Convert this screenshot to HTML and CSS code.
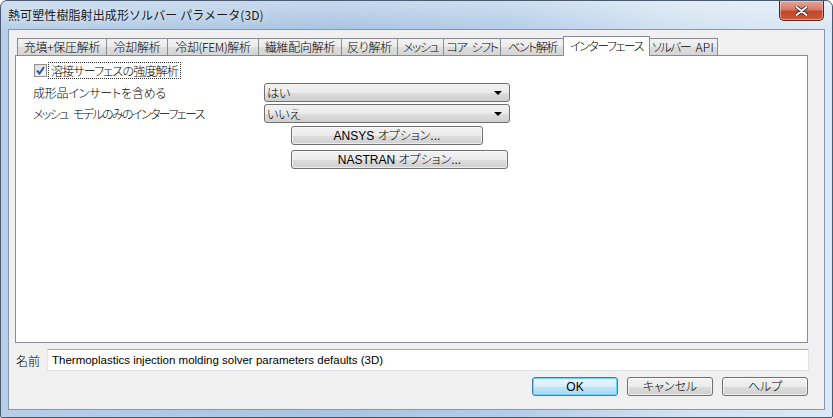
FILE: index.html
```html
<!DOCTYPE html>
<html lang="ja">
  <head>
    <meta charset="utf-8" />
    <title>熱可塑性樹脂射出成形ソルバー パラメータ(3D)</title>
    <link rel="stylesheet" href="styles.css">
  </head>
  <body>
    <div class="window">
      <div class="titlebar">
        <span class="title">熱可塑性樹脂射出成形ソルバー パラメータ(3D)</span>
        <button class="close-btn" aria-label="閉じる">
          <svg width="13" height="10" viewBox="0 0 13 10">
            <path d="M1.5 1 L11.5 9 M11.5 1 L1.5 9" stroke="#3a2a28" stroke-width="3.6" stroke-linecap="round" />
            <path d="M1.5 1 L11.5 9 M11.5 1 L1.5 9" stroke="#ffffff" stroke-width="2" stroke-linecap="round" />
          </svg>
        </button>
      </div>
      <div class="client">
        <div class="tabbox">
          <div class="tabs">
            <div class="tab">充填+保圧解析</div>
            <div class="tab">冷却解析</div>
            <div class="tab">冷却(FEM)解析</div>
            <div class="tab">繊維配向解析</div>
            <div class="tab">反り解析</div>
            <div class="tab kana">メッシュ</div>
            <div class="tab kana">コア シフト</div>
            <div class="tab kana">ベント解析</div>
            <div class="tab kana active">インターフェース</div>
            <div class="tab kana">ソルバー <span class="latin">API</span></div>
          </div>
          <div class="panel">
            <div class="check-row">
              <span class="checkbox">
                <svg width="9" height="9" viewBox="0 0 9 9">
                  <path d="M1 4.5 L3.5 7.5 L8 1" fill="none" stroke="#2c55a8" stroke-width="2" />
                </svg>
              </span>
              <span class="check-label">溶接サーフェスの強度解析</span>
            </div>
            <div class="field-row first">
              <span class="field-label">成形品インサートを含める</span>
              <div class="combo"><span>はい</span><span class="arrow"></span></div>
            </div>
            <div class="field-row second">
              <span class="field-label mesh">メッシュ モデルのみのインターフェース</span>
              <div class="combo"><span>いいえ</span><span class="arrow"></span></div>
            </div>
            <button class="btn ansys">ANSYS オプション...</button>
            <button class="btn nastran">NASTRAN オプション...</button>
          </div>
        </div>
        <div class="name-row">
          <span class="name-label">名前</span>
          <div class="name-input">Thermoplastics injection molding solver parameters defaults (3D)</div>
        </div>
        <div class="actions">
          <button class="btn dlg default">OK</button>
          <button class="btn dlg">キャンセル</button>
          <button class="btn dlg">ヘルプ</button>
        </div>
      </div>
    </div>
  </body>
</html>
```

FILE: styles.css
```css
* {
  box-sizing: border-box;
}

html,
body {
  margin: 0;
  width: 833px;
  height: 418px;
  overflow: hidden;
  background: #ffffff;
}

body {
  font-family: "Noto Sans CJK JP", "Liberation Sans", sans-serif;
  font-size: 12px;
  font-weight: 300;
  color: #000000;
  font-feature-settings: "palt";
}

.window {
  width: 833px;
  height: 418px;
  display: flex;
  flex-direction: column;
  border: 1px solid #4a5a70;
  border-radius: 7px 7px 2px 2px;
  background:
    linear-gradient(to bottom, rgba(255, 255, 255, 0.35), rgba(255, 255, 255, 0) 30px),
    linear-gradient(to right, #b7cfe9 0%, #a9c4e2 40%, #b4cde8 62%, #d2e2f2 82%, #dbe8f5 100%);
  padding: 0 7px 7px 7px;
}

.titlebar {
  height: 28px;
  display: flex;
  align-items: flex-start;
  flex-shrink: 0;
}

.title {
  margin-top: 5px;
  font-size: 12px;
  font-weight: 400;
  letter-spacing: 0.1px;
  font-feature-settings: normal;
  color: #1a1a1a;
  text-shadow: 0 0 6px rgba(255, 255, 255, 0.9);
}

.close-btn {
  margin-left: auto;
  margin-right: 1px;
  width: 45px;
  height: 20px;
  border: 1px solid #5b2219;
  border-top: none;
  border-radius: 0 0 5px 5px;
  background: linear-gradient(to bottom, #e7a596 0%, #d77a66 45%, #c4462c 55%, #c95a3c 100%);
  box-shadow: inset 0 0 0 1px rgba(255, 220, 210, 0.5);
  display: flex;
  align-items: center;
  justify-content: center;
  padding: 0;
}

.client {
  flex: 1;
  background: #f0f0f0;
  border: 1px solid #8497ae;
  display: flex;
  flex-direction: column;
  padding: 0 15px 0 6px;
}

.tabbox {
  margin-top: 6px;
  width: 793px;
}

.tabs {
  height: 19px;
  display: flex;
  align-items: flex-end;
  padding-left: 2px;
}

.tab {
  height: 17px;
  margin-right: -1px;
  border: 1px solid #898c95;
  border-bottom: none;
  background: linear-gradient(to bottom, #f2f2f2 0%, #ebebeb 50%, #dddddd 51%, #d5d5d5 100%);
  display: flex;
  align-items: center;
  justify-content: center;
  line-height: 1;
  white-space: pre;
  letter-spacing: -0.3px;
}

.tab.kana {
  letter-spacing: -1.5px;
  word-spacing: 4px;
}

.tab .latin {
  letter-spacing: 0.3px;
}

.tab:nth-child(1) { width: 90px; }
.tab:nth-child(2) { width: 62px; }
.tab:nth-child(3) { width: 92px; }
.tab:nth-child(4) { width: 84px; }
.tab:nth-child(5) { width: 57px; }
.tab:nth-child(6) { width: 47px; }
.tab:nth-child(7) { width: 58px; }
.tab:nth-child(8) { width: 65px; }
.tab:nth-child(10) { width: 70px; }

.tab.active {
  width: 87px;
  height: 20px;
  margin-left: -1px;
  margin-right: -2px;
  margin-bottom: -1px;
  background: #ffffff;
  position: relative;
  z-index: 1;
  padding-bottom: 2px;
}

.panel {
  height: 288px;
  background: #ffffff;
  border: 1px solid #898c95;
  padding: 6px 0 0 17px;
  display: flex;
  flex-direction: column;
  align-items: flex-start;
}

.check-row {
  height: 17px;
  display: flex;
  align-items: center;
}

.checkbox {
  width: 13px;
  height: 13px;
  margin-left: 1px;
  border: 1px solid #8e8f8f;
  background: linear-gradient(135deg, #dcdcdc, #f6f6f6);
  display: flex;
  align-items: center;
  justify-content: center;
}

.check-label {
  margin-left: 1px;
  height: 17px;
  padding: 0 2px;
  border: 1px dotted #333333;
  line-height: 15px;
  letter-spacing: -0.8px;
}

.field-row {
  display: flex;
  align-items: center;
  height: 19px;
}

.field-row.first {
  margin-top: 4px;
}

.field-row.second {
  margin-top: 2px;
}

.field-label {
  width: 231px;
  letter-spacing: -0.2px;
  white-space: pre;
}

.field-label.mesh {
  letter-spacing: -1.6px;
  word-spacing: 4px;
}

.combo {
  width: 246px;
  height: 19px;
  border: 1px solid #707070;
  border-radius: 3px;
  background: linear-gradient(to bottom, #f2f2f2 0%, #ebebeb 50%, #dddddd 51%, #cfcfcf 100%);
  display: flex;
  align-items: center;
  justify-content: space-between;
  padding: 0 7px 0 2px;
  line-height: 1;
}

.arrow {
  width: 0;
  height: 0;
  border-left: 4px solid transparent;
  border-right: 4px solid transparent;
  border-top: 4px solid #000000;
}

.btn {
  font-family: "Liberation Sans", "Noto Sans CJK JP", sans-serif;
  font-size: 12px;
  font-weight: 300;
  font-feature-settings: "palt";
  color: #000000;
  height: 19px;
  border: 1px solid #707070;
  border-radius: 3px;
  background: linear-gradient(to bottom, #f2f2f2 0%, #ebebeb 50%, #dddddd 51%, #cfcfcf 100%);
  box-shadow: inset 0 0 0 1px rgba(255, 255, 255, 0.6);
  padding: 0;
  line-height: 1;
}

.btn.ansys {
  margin-top: 3px;
  margin-left: 258px;
  width: 192px;
}

.btn.nastran {
  margin-top: 5px;
  margin-left: 258px;
  width: 217px;
}

.name-row {
  margin-top: 6px;
  height: 22px;
  display: flex;
  align-items: center;
}

.name-label {
  width: 32px;
  padding-left: 1px;
  font-feature-settings: normal;
}

.name-input {
  width: 762px;
  height: 22px;
  border: 1px solid #dfe3e8;
  border-top-color: #abadb3;
  border-left-color: #e2e3ea;
  background: #ffffff;
  padding: 1px 0 0 4px;
  line-height: 18px;
  font-family: "Liberation Sans", "Noto Sans CJK JP", sans-serif;
  font-size: 11.5px;
  font-weight: 400;
  white-space: nowrap;
}

.actions {
  margin-top: 6px;
  display: flex;
  justify-content: flex-end;
  gap: 9px;
  padding-right: 1px;
}

.btn.dlg {
  width: 86px;
}

.btn.default {
  border-color: #3c7fb1;
  background: linear-gradient(to bottom, #eaf6fd 0%, #d9f0fc 50%, #bee6fd 51%, #a7d9f5 100%);
  box-shadow: inset 0 0 0 1px #6fd3f8;
}
```
